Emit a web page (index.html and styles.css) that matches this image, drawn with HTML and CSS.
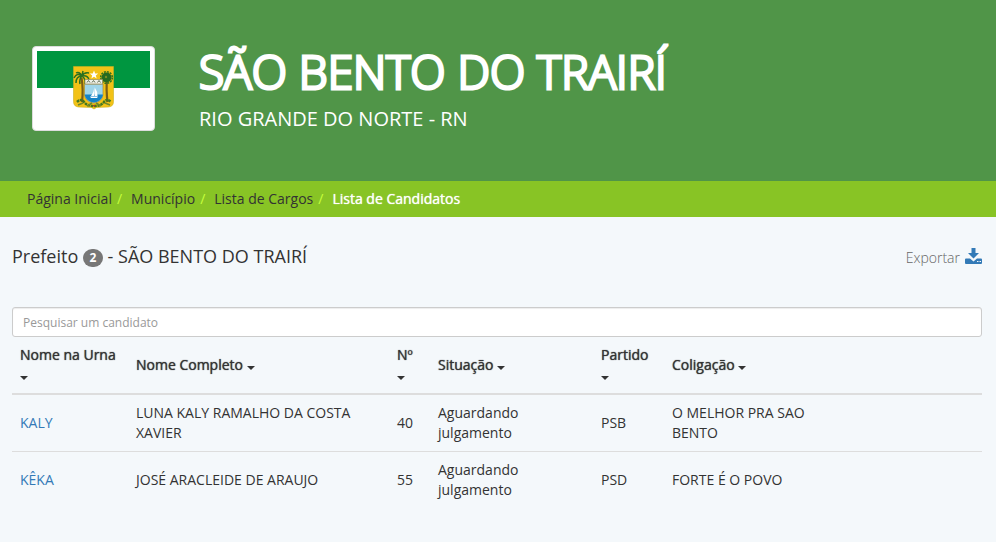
FILE: index.html
```html
<!DOCTYPE html>
<html lang="pt-br">
<head>
    <meta charset="UTF-8">
    <meta name="viewport" content="width=device-width, initial-scale=1.0">
    <title>Lista de Candidatos | São Bento do Trairí</title>
    <link rel="stylesheet" href="styles.css">
</head>
<body>
    <header class="header">
        <div class="flag">
            <svg viewBox="0 0 113 75" role="img" aria-label="Bandeira do Rio Grande do Norte">
                <rect width="113" height="75" fill="#fff"/>
                <rect width="113" height="37" fill="#009640"/>
                <path d="M36.500 15.500h40v35q0 5-5 5.500l-12 .5-2.500 1.500-2.500-1.500-13-.5q-5-.5-5-5.500z" fill="#f3c216" stroke="#c8b020" stroke-width=".6"/>
                <!-- star -->
                <path d="M57 19.500l1.200 3h3l-2.400 2 .9 3-2.700-1.800-2.700 1.800.9-3-2.400-2h3z" fill="#fff"/>
                <!-- coconut palm and carnauba -->
                <path d="M44.500 27q2 11 .5 24M70 28q-1 10 .5 23" fill="none" stroke="#795d18" stroke-width="2.200"/>
                <path d="M45 25q-5-4-8 2M45 25q-6 0-6 7M45 25q-3 3-2 8M45 25q4 3 3 8M45 25q6-1 7 4M45 25q2-4 7-3M45 25q-3-5-6-3M45 25l1-5" fill="none" stroke="#2d7020" stroke-width="1.500"/>
                <circle cx="69.500" cy="26.500" r="5" fill="#276a20"/>
                <circle cx="69.500" cy="26.500" r="5.800" fill="none" stroke="#34751e" stroke-width="1.600" stroke-dasharray="2 1"/>
                <circle cx="69" cy="26" r="1.200" fill="#7b8f22"/>
                <!-- shield -->
                <path d="M47.500 33h18.500v11q-1 7-9.300 8-8.200-1-9.200-8z" fill="#9fd5e9" stroke="#a88a3a" stroke-width=".7"/>
                <path d="M47.800 43.500h18v1q-1.500 6-9 7-7.500-1-9-7z" fill="#1583c5"/>
                <path d="M48 28.500h17.500v4.500H48z" fill="#eef0e8" stroke="#998b55" stroke-width=".7"/>
                <path d="M50 31.500l1.500-2 1.500 2M55 31.500l1.500-2 1.500 2M60.500 31.500l1.500-2 1.500 2" fill="none" stroke="#627052"/>
                <path d="M57.500 36v9h-3.500q3-4 3.500-9zM58 37q3 4 2.500 8h-2.500zM53 45.500h8l-1 1.500h-6z" fill="#fff"/>
                <!-- garland -->
                <path d="M40 51q4-4 7 0t10 4q7 0 10-4t7 0" fill="none" stroke="#42781f" stroke-width="2.500" stroke-dasharray="2.500 .7"/>
                <path d="M41 54l5-2M68 52l5 2M50 55l5-3M59 52l5 3" stroke="#718829" stroke-width="1.500"/>
                <path d="M55.500 54l1.500 2 1.500-2z" fill="#b2382c"/>
            </svg>
        </div>
        <div class="city">
            <h1>SÃO BENTO DO TRAIRÍ</h1>
            <p>RIO GRANDE DO NORTE - RN</p>
        </div>
    </header>

    <nav aria-label="Navegação">
        <ol class="breadcrumb">
            <li><a href="#">Página Inicial</a></li>
            <li><a href="#">Município</a></li>
            <li><a href="#">Lista de Cargos</a></li>
            <li class="active">Lista de Candidatos</li>
        </ol>
    </nav>

    <main class="content">
        <div class="title-bar">
            <h2>Prefeito <span class="badge">2</span> - SÃO BENTO DO TRAIRÍ</h2>
            <a href="#" class="export">Exportar
                <svg class="icon-save" viewBox="0 0 17 16" aria-hidden="true">
                    <path d="M6.500 0h4v5h3.500L8.500 10.500 3 5h3.500z" fill="#337ab7"/>
                    <path d="M1 10.500h4l3.500 3 3.500-3h4q1 0 1 1v3.500q0 1-1 1H1q-1 0-1-1v-3.500q0-1 1-1z" fill="#337ab7"/>
                    <path d="M12 13h1.500v1H12zM14.500 13H16v1h-1.500z" fill="#f4f8fb"/>
                </svg>
            </a>
        </div>

        <input type="text" class="search" placeholder="Pesquisar um candidato" aria-label="Pesquisar um candidato">

        <table class="table">
            <thead>
                <tr>
                    <th class="col-urna">Nome na Urna <span class="caret"></span></th>
                    <th class="col-nome">Nome Completo <span class="caret"></span></th>
                    <th class="col-numero">Nº <span class="caret"></span></th>
                    <th class="col-situacao">Situação <span class="caret"></span></th>
                    <th class="col-partido">Partido <span class="caret"></span></th>
                    <th class="col-coligacao">Coligação <span class="caret"></span></th>
                    <td></td>
                </tr>
            </thead>
            <tbody>
                <tr>
                    <td><a href="#">KALY</a></td>
                    <td>LUNA KALY RAMALHO DA COSTA XAVIER</td>
                    <td>40</td>
                    <td>Aguardando julgamento</td>
                    <td>PSB</td>
                    <td>O MELHOR PRA SAO BENTO</td>
                    <td></td>
                </tr>
                <tr>
                    <td><a href="#">KÊKA</a></td>
                    <td>JOSÉ ARACLEIDE DE ARAUJO</td>
                    <td>55</td>
                    <td>Aguardando julgamento</td>
                    <td>PSD</td>
                    <td>FORTE É O POVO</td>
                    <td></td>
                </tr>
            </tbody>
        </table>
    </main>
</body>
</html>
```
FILE: styles.css
```css
* {
    box-sizing: border-box;
}
body {
    margin: 0;
    background-color: #f4f8fb;
    color: #333;
    font-family: "Open Sans", Arial, sans-serif;
    font-size: 14px;
    font-weight: 400;
    line-height: 20px;
}
h1, h2, p {
    margin: 0;
}
a {
    color: #337ab7;
    text-decoration: none;
}
.header {
    display: flex;
    align-items: flex-start;
    gap: 44px;
    padding: 46px 32px 48px;
    background-color: #509548;
    color: #fff;
}
.flag {
    width: 123px;
    padding: 4px;
    background-color: #fff;
    border: 1px solid #ddd;
    border-radius: 4px;
}
.flag svg {
    display: block;
    width: 100%;
}
.city h1 {
    font-size: 46px;
    font-weight: 300;
    line-height: 50px;
    -webkit-text-stroke: 3px #fff;
}
.city p {
    margin-top: 8px;
    font-size: 20px;
    line-height: 29px;
}
.breadcrumb {
    display: flex;
    margin: 0;
    padding: 8px 27px;
    background-color: #88c425;
    list-style: none;
}
.breadcrumb a {
    color: #333;
}
.breadcrumb li + li::before {
    content: "/";
    padding: 0 9px 0 5px;
    color: #c6ff3d;
}
.breadcrumb .active {
    color: #fff;
    text-shadow: 0 0 1px #fff;
}
.breadcrumb .active::before {
    text-shadow: none;
}
.content {
    padding: 29px 14px 24px 12px;
}
.title-bar {
    display: flex;
    justify-content: space-between;
    margin-bottom: 37px;
}
.title-bar h2 {
    font-size: 18px;
    font-weight: 400;
    line-height: 20px;
}
.badge {
    display: inline-block;
    min-width: 20px;
    padding: 3px 6px;
    border-radius: 10px;
    background-color: #777;
    color: #fff;
    font-size: 12px;
    font-weight: 700;
    line-height: 12px;
    text-align: center;
    vertical-align: middle;
}
.export {
    display: flex;
    gap: 5px;
    color: #666;
    font-weight: 300;
    line-height: 24px;
}
.icon-save {
    width: 17px;
    height: 16px;
    margin-top: 2px;
}
.search {
    display: block;
    width: 100%;
    height: 30px;
    padding: 5px 10px;
    border: 1px solid #ccc;
    border-radius: 3px;
    background-color: #fff;
    box-shadow: inset 0 1px 1px rgba(0, 0, 0, 0.075);
    color: #555;
    font-family: inherit;
    font-size: 12px;
}
.search::placeholder {
    color: #999;
}
.table {
    width: 100%;
    table-layout: fixed;
    border-spacing: 0;
}
.table th,
.table td {
    padding: 8px;
    text-align: left;
    vertical-align: middle;
}
.table th {
    font-weight: 400;
    text-shadow: 0 0 1px #333;
}
.table thead th,
.table thead td {
    border-bottom: 2px solid #ddd;
}
.table tbody tr + tr td {
    border-top: 1px solid #ddd;
}
.col-urna {
    width: 116px;
}
.col-nome {
    width: 261px;
}
.col-numero {
    width: 41px;
}
.col-situacao {
    width: 163px;
}
.col-partido {
    width: 71px;
}
.col-coligacao {
    width: 17%;
}
.caret {
    display: inline-block;
    margin-top: 4px;
    border-top: 4px solid #333;
    border-right: 4px solid transparent;
    border-left: 4px solid transparent;
    vertical-align: middle;
}
```
